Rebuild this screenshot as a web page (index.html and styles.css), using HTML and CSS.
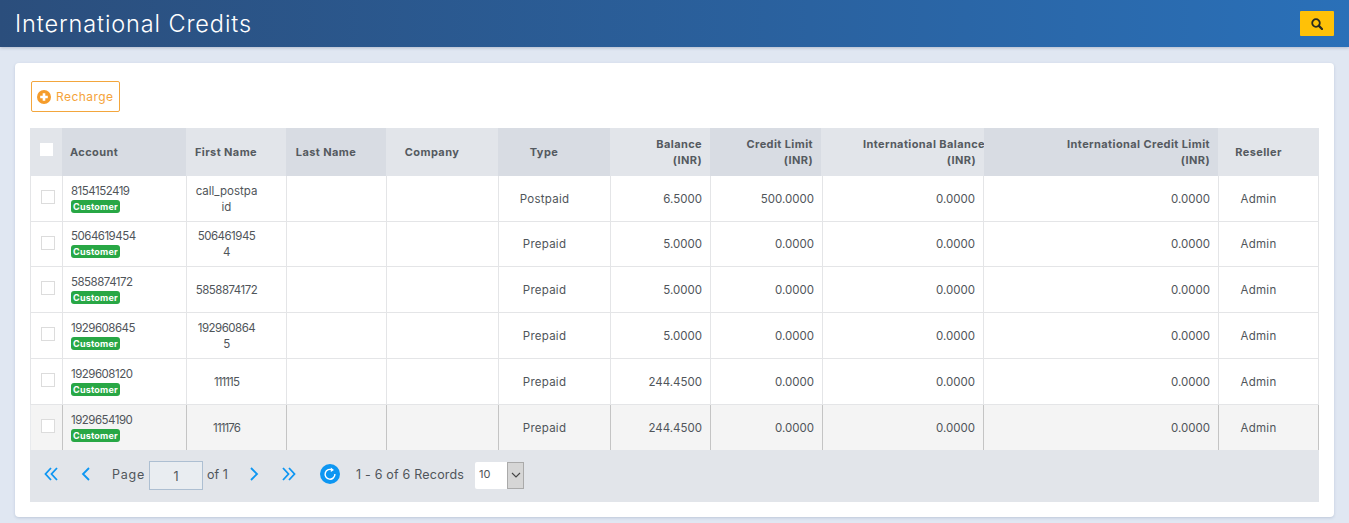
FILE: index.html
```html
<!DOCTYPE html>
<html lang="en">
<head>
<meta charset="utf-8">
<title>International Credits</title>
<link rel="stylesheet" href="styles.css">
</head>
<body>
<header class="topbar">
  <h1 class="title">International Credits</h1>
  <button class="search-btn" aria-label="Search">
    <svg width="12" height="12" viewBox="0 0 12 12"><circle cx="5" cy="5" r="3.8" fill="none" stroke="#2a2a20" stroke-width="1.8"/><path d="M7.9 7.9 11 11" stroke="#2a2a20" stroke-width="2.2" stroke-linecap="round"/></svg>
  </button>
</header>
<main class="card">
  <button class="recharge">
    <svg width="14" height="14" viewBox="0 0 14 14"><circle cx="7" cy="7" r="7" fill="#f59c2a"/><path d="M7 3.2v7.6M3.2 7h7.6" stroke="#fff" stroke-width="2.6"/></svg>
    Recharge
  </button>
  <div class="grid">
    <div class="head">
      <div class="th shade-a"><span class="head-check"></span></div>
      <div class="th shade-b">Account</div>
      <div class="th shade-a center">First Name</div>
      <div class="th shade-b center">Last Name</div>
      <div class="th shade-a center">Company</div>
      <div class="th shade-b center">Type</div>
      <div class="th shade-a right">Balance<br>(INR)</div>
      <div class="th shade-b right">Credit Limit<br>(INR)</div>
      <div class="th shade-a right clip"><span class="over">International Balance</span><br>(INR)</div>
      <div class="th shade-b right">International Credit Limit<br>(INR)</div>
      <div class="th shade-a center">Reseller</div>
    </div>
    <div class="row">
      <div class="td"><span class="check"></span></div>
      <div class="td acct"><span class="num">8154152419</span><span class="badge">Customer</span></div>
      <div class="td center"><span class="tight">call_postpa<br>id</span></div>
      <div class="td"></div><div class="td"></div>
      <div class="td center">Postpaid</div>
      <div class="td right">6.5000</div><div class="td right">500.0000</div><div class="td right">0.0000</div><div class="td right">0.0000</div>
      <div class="td center">Admin</div>
    </div>
    <div class="row short">
      <div class="td"><span class="check"></span></div>
      <div class="td acct"><span class="num">5064619454</span><span class="badge">Customer</span></div>
      <div class="td center"><span class="num">506461945<br>4</span></div>
      <div class="td"></div><div class="td"></div>
      <div class="td center">Prepaid</div>
      <div class="td right">5.0000</div><div class="td right">0.0000</div><div class="td right">0.0000</div><div class="td right">0.0000</div>
      <div class="td center">Admin</div>
    </div>
    <div class="row">
      <div class="td"><span class="check"></span></div>
      <div class="td acct"><span class="num">5858874172</span><span class="badge">Customer</span></div>
      <div class="td center"><span class="num">5858874172</span></div>
      <div class="td"></div><div class="td"></div>
      <div class="td center">Prepaid</div>
      <div class="td right">5.0000</div><div class="td right">0.0000</div><div class="td right">0.0000</div><div class="td right">0.0000</div>
      <div class="td center">Admin</div>
    </div>
    <div class="row">
      <div class="td"><span class="check"></span></div>
      <div class="td acct"><span class="num">1929608645</span><span class="badge">Customer</span></div>
      <div class="td center"><span class="num">192960864<br>5</span></div>
      <div class="td"></div><div class="td"></div>
      <div class="td center">Prepaid</div>
      <div class="td right">5.0000</div><div class="td right">0.0000</div><div class="td right">0.0000</div><div class="td right">0.0000</div>
      <div class="td center">Admin</div>
    </div>
    <div class="row">
      <div class="td"><span class="check"></span></div>
      <div class="td acct"><span class="num">1929608120</span><span class="badge">Customer</span></div>
      <div class="td center"><span class="ones">111115</span></div>
      <div class="td"></div><div class="td"></div>
      <div class="td center">Prepaid</div>
      <div class="td right">244.4500</div><div class="td right">0.0000</div><div class="td right">0.0000</div><div class="td right">0.0000</div>
      <div class="td center">Admin</div>
    </div>
    <div class="row short hover">
      <div class="td"><span class="check"></span></div>
      <div class="td acct"><span class="num">1929654190</span><span class="badge">Customer</span></div>
      <div class="td center"><span class="ones">111176</span></div>
      <div class="td"></div><div class="td"></div>
      <div class="td center">Prepaid</div>
      <div class="td right">244.4500</div><div class="td right">0.0000</div><div class="td right">0.0000</div><div class="td right">0.0000</div>
      <div class="td center">Admin</div>
    </div>
    <div class="pager">
      <button class="pg pg-first" aria-label="First"><svg width="14" height="14" viewBox="0 0 14 14"><path d="M7 1 1.5 7 7 13M13 1 7.5 7 13 13"/></svg></button>
      <button class="pg pg-prev" aria-label="Previous"><svg width="10" height="14" viewBox="0 0 10 14"><path d="M8 1 2 7 8 13"/></svg></button>
      <span class="pg-label">Page</span>
      <input class="pg-input" value="1" aria-label="Page">
      <span class="pg-of">of 1</span>
      <button class="pg pg-next" aria-label="Next"><svg width="10" height="14" viewBox="0 0 10 14"><path d="M2 1 8 7 2 13"/></svg></button>
      <button class="pg pg-last" aria-label="Last"><svg width="14" height="14" viewBox="0 0 14 14"><path d="M1 1 6.5 7 1 13M7 1 12.5 7 7 13"/></svg></button>
      <button class="pg-refresh" aria-label="Refresh"><svg width="20" height="20" viewBox="0 0 20 20"><circle cx="10" cy="10" r="10" fill="#0d96f2"/><path d="M12.4 6A4.9 4.9 0 1 0 14.9 10" fill="none" stroke="#fff" stroke-width="1.4"/><path d="M10.8 3.6 14 5.9l-3.2 2.2z" fill="#fff"/></svg></button>
      <span class="pg-records">1 - 6 of 6 Records</span>
      <div class="pg-select"><span class="pg-value">10</span><span class="pg-arrow"><svg width="10" height="6" viewBox="0 0 10 6"><path d="M1 1 5 5 9 1" fill="none" stroke="#444" stroke-width="1.1"/></svg></span></div>
    </div>
  </div>
</main>
</body>
</html>
```
FILE: styles.css
```css
* { box-sizing: border-box; }
html, body { margin: 0; height: 100%; overflow: hidden; }
body {
  background: #e0e7f2;
  font-family: Inter, "Liberation Sans", sans-serif;
  font-size: 11.5px;
  color: #454a50;
}
.topbar {
  height: 47px;
  display: flex;
  align-items: center;
  justify-content: space-between;
  padding: 0 15px;
  background: linear-gradient(90deg, #2b4e7c 0%, #2a62a0 60%, #2a70b8 100%);
  box-shadow: 0 1px 3px rgba(40, 60, 90, .25);
}
.title {
  margin: 0;
  font-size: 23.5px;
  font-weight: 300;
  color: #fff;
  letter-spacing: .88px;
}
.search-btn {
  width: 34px;
  height: 25px;
  border: 0;
  border-radius: 1px;
  background: #ffc107;
  display: flex;
  align-items: center;
  justify-content: center;
  padding: 0;
}
.card {
  margin: 16px 15px 0;
  height: 454px;
  padding: 18px 15px 15px;
  background: #fff;
  border-radius: 4px;
  box-shadow: 0 1px 3px rgba(70, 90, 130, .22);
}
.recharge {
  display: flex;
  align-items: center;
  gap: 5px;
  width: 89px;
  height: 31px;
  margin: 0 0 16px 1px;
  padding: 0 0 0 5px;
  background: #fff;
  border: 1px solid #f3a63d;
  border-radius: 2px;
  color: #f5a33a;
  font: 12px Inter, "Liberation Sans", sans-serif;
  letter-spacing: .45px;
}
.head, .row { display: grid; }
.head {
  grid-template-columns: 32px 124px 100px 100px 112px 112px 100px 111px 163px 234px 101px;
  height: 48px;
}
.row {
  grid-template-columns: 33px 124px 100px 100px 112px 112px 100px 112px 161px 235px 100px;
  height: 46px;
}
.row.short { height: 45px; }
.th, .td {
  min-width: 0;
  line-height: 16px;
}
.th {
  padding: 8px 8px;
  font-weight: 700;
  font-size: 11px;
  letter-spacing: .4px;
  color: #555a60;
}
.shade-a { background: #e2e5ea; }
.shade-b { background: #d8dce3; }
.th:not(.right) { padding-top: 16px; }
.th.center { text-align: center; padding-left: 0; padding-right: 20px; }
.th.right { text-align: right; }
.th.clip { overflow: hidden; white-space: nowrap; }
.th .over { margin-right: -9px; }
.head-check {
  display: block;
  width: 13px;
  height: 13px;
  margin: -1px 0 0 2px;
  background: #fff;
}
.td {
  display: flex;
  flex-direction: column;
  justify-content: center;
  padding: 0 8px;
  border-right: 1px solid #e4e5e7;
  border-bottom: 1px solid #e4e5e7;
  color: #50555a;
}
.td:first-child { border-left: 1px solid #e4e5e7; }
.td.center { text-align: center; padding: 0 20px 0 0; letter-spacing: .25px; }
.td.right { text-align: right; padding-right: 8px; }
.acct { align-items: flex-start; padding-bottom: 2px; }
.td .num { letter-spacing: -.5px; }
.td .ones { letter-spacing: -.9px; }
.td .tight { letter-spacing: 0; }
.check {
  display: block;
  width: 14px;
  height: 14px;
  margin: -3px 0 0 2px;
  background: #fff;
  border: 1px solid #dcdcdc;
}
.badge {
  margin-top: 1px;
  width: 49px;
  height: 13px;
  line-height: 13px;
  background: #28a745;
  border-radius: 3px;
  color: #fff;
  font-size: 9px;
  font-weight: 700;
  letter-spacing: .2px;
  text-align: center;
  white-space: nowrap;
}
.hover { background: #f4f4f4; }
.hover .td { border-right-color: #c4c4c4; border-bottom: 0; }
.hover .td:first-child { border-left-color: #e8eaed; }
.pager {
  display: flex;
  align-items: center;
  height: 52px;
  background: #e2e5ea;
  padding: 0 0 4px 14px;
  font-size: 12.5px;
  letter-spacing: .2px;
  color: #50555a;
}
.pg {
  padding: 0;
  border: 0;
  background: none;
  display: flex;
  align-items: center;
  justify-content: center;
}
.pg svg path { fill: none; stroke: #0d96f2; stroke-width: 1.8; }
.pg-prev { margin-left: 23px; }
.pg-label { margin-left: 21px; width: 34px; letter-spacing: .8px; white-space: nowrap; }
.pg-input {
  width: 54px;
  height: 29px;
  margin: 3px 0 0 3px;
  border: 1px solid #adbfd2;
  background: #e9edf1;
  text-align: center;
  color: #50555a;
  font: 12.5px Inter, sans-serif;
  padding: 2px 0 0;
}
.pg-of { margin-left: 4px; width: 21px; letter-spacing: 0; white-space: nowrap; }
.pg-next { margin-left: 21px; }
.pg-last { margin-left: 23px; }
.pg-refresh {
  margin-left: 24px;
  padding: 0;
  border: 0;
  background: none;
  height: 20px;
}
.pg-records { margin-left: 16px; width: 119px; white-space: nowrap; }
.pg-select {
  display: flex;
  width: 49px;
  height: 27px;
  margin-top: 2px;
}
.pg-value {
  width: 32px;
  background: #fff;
  border-radius: 2px 0 0 2px;
  font-size: 11px;
  line-height: 25px;
  padding-left: 4px;
  letter-spacing: 0;
}
.pg-arrow {
  width: 17px;
  border: 1px solid #aaa;
  background: #d6d6d6;
  display: flex;
  align-items: center;
  justify-content: center;
}
```
